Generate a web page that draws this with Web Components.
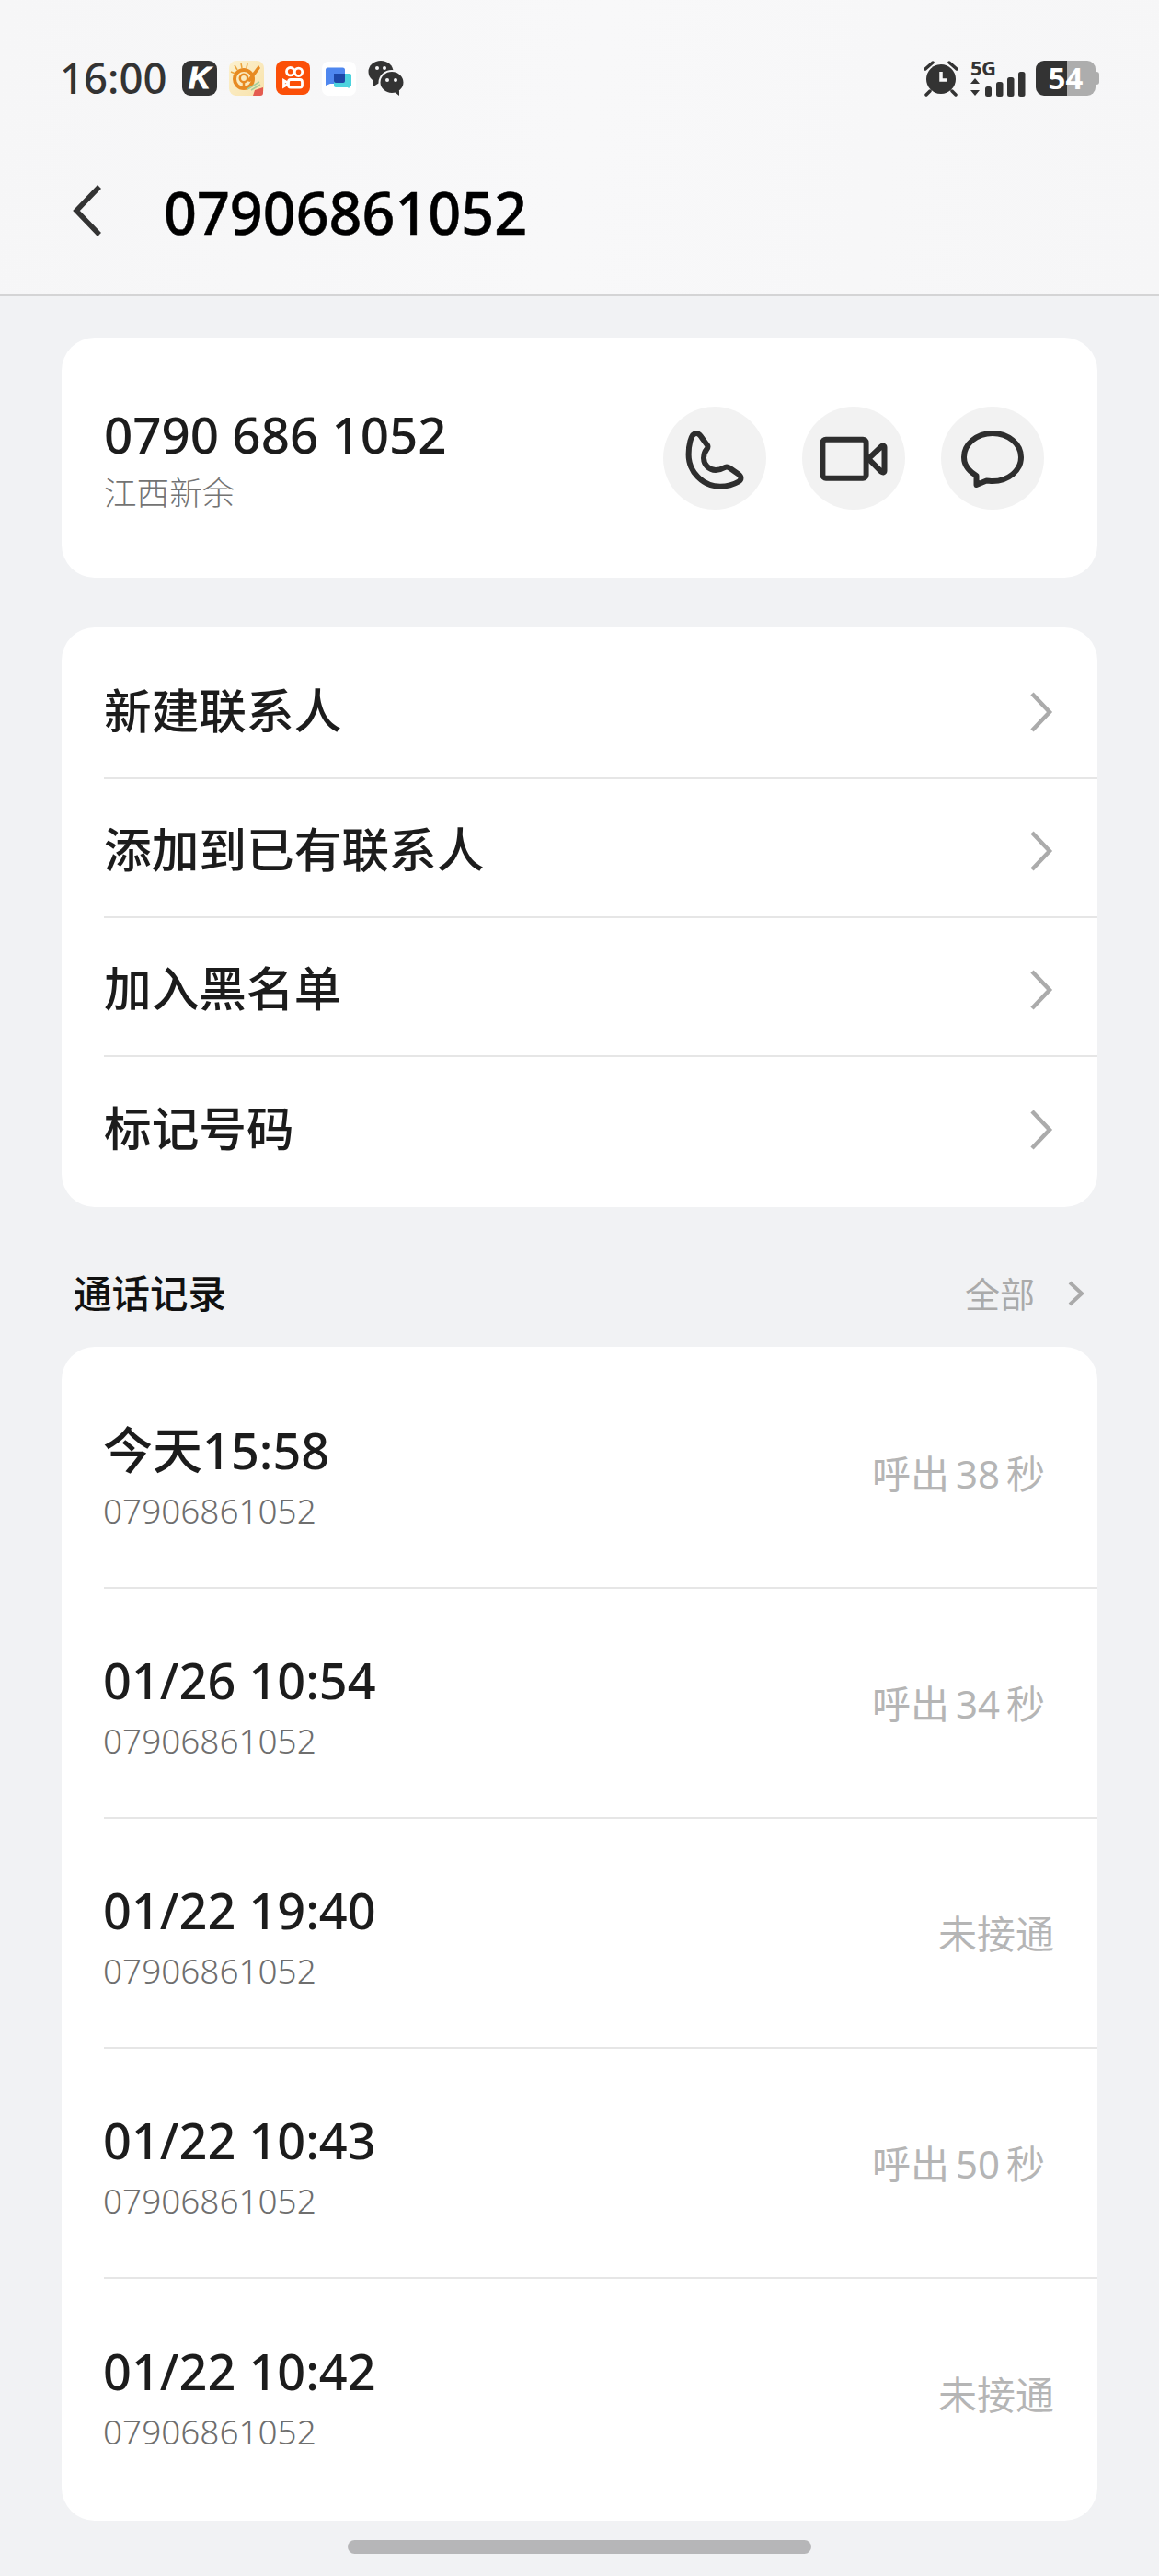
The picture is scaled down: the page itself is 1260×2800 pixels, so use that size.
<!DOCTYPE html>
<html lang="zh"><head><meta charset="utf-8"><title>07906861052</title>
<style>
html,body{margin:0;padding:0;background:#f1f2f4}
body{width:1260px;height:2800px;overflow:hidden;font-family:"Noto Sans","Noto Sans CJK SC",sans-serif;color:#1c1c1c}
</style></head><body>
<phone-app>
  <status-bar slot="top"></status-bar>
  <title-bar slot="top">07906861052</title-bar>
  <info-card number="0790 686 1052" place="江西新余"></info-card>
  <menu-card>
    <menu-row>新建联系人</menu-row>
    <menu-row>添加到已有联系人</menu-row>
    <menu-row>加入黑名单</menu-row>
    <menu-row last>标记号码</menu-row>
  </menu-card>
  <section-head title="通话记录" more="全部"></section-head>
  <call-card>
    <call-row time="今天15:58" status="呼出 38 秒"></call-row>
    <call-row time="01/26 10:54" status="呼出 34 秒"></call-row>
    <call-row time="01/22 19:40" status="未接通" wide></call-row>
    <call-row time="01/22 10:43" status="呼出 50 秒"></call-row>
    <call-row time="01/22 10:42" status="未接通" wide last></call-row>
  </call-card>
  <home-bar></home-bar>
</phone-app>
<script>
function def(name,css,html,init){
  customElements.define(name,class extends HTMLElement{
    constructor(){super();const r=this.attachShadow({mode:'open'});
      r.innerHTML='<style>'+css+'</style>'+(typeof html==='function'?html(this):html);}
    connectedCallback(){
      if(typeof init==='function')init(this,this.shadowRoot);
    }
  });
}
const CJK='"Noto Sans","Noto Sans CJK SC",sans-serif';
const attr=(el,root,map)=>{for(const k in map){const n=root.querySelector(map[k]);if(n)n.textContent=el.getAttribute(k)||'';}};

def('phone-app',`:host{display:block;width:1260px;height:2800px;background:#f1f2f4}
.top{display:block;background:linear-gradient(100deg,#f6f6f7,#f8f8f9 50%,#f6f6f7)}
.main{display:flex;flex-direction:column;padding:45px 67px 0}`,
`<div class="top"><slot name="top"></slot></div><div class="main"><slot></slot></div>`);

def('status-bar',`:host{display:flex;align-items:center;height:130px;padding:40px 65px 0 65px;box-sizing:border-box;justify-content:space-between;color:#333}
.l,.r{display:flex;align-items:center}
.t{font:500 45.500px/50px ${CJK};width:133px;position:relative;top:-1px}
svg{display:block}.ic{margin-right:12px}
.k{width:38px;height:38px;border-radius:9px;background:#333;color:#fff;font:italic 700 33px/38px "Liberation Sans",sans-serif;-webkit-text-stroke:1px #fff;text-align:center;margin-right:13px}
.sig{display:flex;flex-direction:column;margin:0 11px 0 12px;width:60px;position:relative;top:-2px}
.fg{font:700 22px/20px ${CJK};height:17px;letter-spacing:-.5px;position:relative;top:2px}
.bat{display:flex;align-items:center;position:relative}
.b{width:65px;height:38px;border-radius:9px;background:linear-gradient(90deg,#333 0 53%,#adadad 53%);color:#fff;font:700 33px/38px ${CJK};text-align:center}
.nub{width:4px;height:14px;background:#adadad;border-radius:0 3px 3px 0}`,
`<div class="l"><span class="t">16:00</span>
<span class="k">K</span>
<svg class="ic" width="39" height="38" viewBox="0 0 39 38"><defs><linearGradient id="g" x1="0" y1="0" x2="1" y2="1"><stop offset="0" stop-color="#fcf1cf"/><stop offset="1" stop-color="#f8e2ab"/></linearGradient></defs><rect width="38" height="38" rx="8" fill="url(#g)"/><path d="M6 5l3 5M13 3l1 5M20 3l-1 5M2 12l5 2" stroke="#eba43c" stroke-width="1.500"/><circle cx="16" cy="20" r="10" fill="none" stroke="#e78a22" stroke-width="4"/><circle cx="16" cy="19" r="4.200" fill="none" stroke="#e78a22" stroke-width="2.500"/><path d="M16 23v5" stroke="#e78a22" stroke-width="2.500"/><path d="M32 5L19 22l4 1 11-15z" fill="#e78a22"/><path d="M20 31l13-8M24 32l10-6" stroke="#a5cf9c" stroke-width="1.500"/><path d="M26 38l2-6 9-3v6a3 3 0 0 1-3 3z" fill="#e45c50"/></svg>
<svg class="ic" width="38" height="38" viewBox="0 0 38 38"><rect width="37" height="37" rx="8" fill="#fb4f08"/><g fill="none" stroke="#fff" stroke-width="2.800"><circle cx="15.700" cy="11.700" r="4.200"/><circle cx="24.500" cy="12.300" r="4.200"/><rect x="13.500" y="20.500" width="15" height="8.500" rx="2.500"/><path d="M13.500 24.500L8.500 21.500v6.500l5-3"/></g></svg>
<svg class="ic" width="37" height="37" viewBox="0 0 37 37" style="margin-right:13px"><rect width="37" height="37" rx="7" fill="#fff"/><path d="M4 9a2.500 2.500 0 0 1 2.500-2.500h16a2.500 2.500 0 0 1 2.500 2.500v12.500a2.500 2.500 0 0 1-2.500 2.500H9l-5 2z" fill="#4f87ef"/><path d="M13 13h17a2 2 0 0 1 2 2v11l-3 3-1-1H15a2 2 0 0 1-2-2z" fill="#4dd3de"/><path d="M13 13h12v8a2 2 0 0 1-2 2h-8a2 2 0 0 1-2-2z" fill="#1d47a8"/></svg>
<svg width="40" height="38" viewBox="0 0 40 38"><ellipse cx="14" cy="12" rx="13.500" ry="12" fill="#333"/><path d="M5 19l1 9 8-5z" fill="#333"/><ellipse cx="26" cy="23.500" rx="13.500" ry="12.500" fill="#333" stroke="#f7f7f8" stroke-width="2"/><path d="M29 34l5 4v-6z" fill="#333"/><circle cx="10" cy="8" r="2" fill="#f7f7f8"/><circle cx="18" cy="8" r="2" fill="#f7f7f8"/><circle cx="21" cy="21" r="2" fill="#f7f7f8"/><circle cx="30" cy="21" r="2" fill="#f7f7f8"/></svg>
</div>
<div class="r">
<svg width="40" height="40" viewBox="0 0 40 40"><circle cx="20" cy="21" r="16" fill="#333"/><path d="M3 10l8-7M37 10l-8-7M8 34l-4 4M32 34l4 4" stroke="#333" stroke-width="3.500" stroke-linecap="round"/><path d="M20 13v9h7" stroke="#f7f7f8" stroke-width="3.500" fill="none"/></svg>
<div class="sig"><span class="fg">5G</span>
<svg width="60" height="27" viewBox="0 0 60 27"><path d="M5 7l5 6H0zM5 26l5-6H0z" fill="#333"/><rect x="16" y="16" width="7" height="11" rx="2.500" fill="#333"/><rect x="28" y="11" width="7.500" height="16" rx="2.500" fill="#333"/><rect x="40" y="6" width="7.500" height="21" rx="2.500" fill="#333"/><rect x="52" y="0" width="7.500" height="27" rx="2.500" fill="#333"/></svg></div>
<div class="bat"><div class="b">54</div><div class="nub"></div></div>
</div>`);

def('title-bar',`:host{display:flex;align-items:center;box-sizing:border-box;padding:0 0 0 79px;height:192px;border-bottom:2px solid #d4d4d5}
svg{display:block;margin-right:67px;position:relative;top:4px}
.x{font:500 62.800px/80px ${CJK};-webkit-text-stroke:.5px #000;color:#000;position:relative;top:6px}`,
`<svg width="32" height="58" viewBox="0 0 32 58"><path d="M29 3L4 29l25 26" fill="none" stroke="#333" stroke-width="5.500"/></svg><span class="x"><slot></slot></span>`);

const ICONS=[
 '<path d="M36 29C39 29 41 32 42.500 34.500L48 42C49 43.500 48.500 44.500 47.500 46C45 49 44 52 44 56C44 63 50 69 57 69C60.500 69 63.500 68 66 66.500C68 65.200 70 65.200 72 66.500L82 73.500C85 75.700 85.500 79.500 82 81.500C76 85 69 86.700 62 86.700C43 86.700 27.600 71 27.600 52C27.600 44 29.500 29 36 29Z"/>',
 '<rect x="22.400" y="35.700" width="47.200" height="42" rx="3.500"/><path d="M72 56.700L86 43.500C88 42 89.500 42.500 89.500 44.500V69.500C89.500 71.500 88 72 86 70.500Z"/>',
 '<path d="M38.500 75C30 70 25 63 25 55C25 40.500 39 29 56 29C73 29 87 40.500 87 55C87 69.500 73 81 56 81C53.500 81 51.500 80.500 49.500 80.500L38.500 85Z"/>'];

def('info-card',`:host{display:flex;align-items:center;justify-content:space-between;height:261px;background:#fff;border-radius:36px;padding:0 58px 0 46px;box-sizing:border-box}
.n{font:500 54.700px/62px ${CJK};color:#1c1c1c}
.p{font:300 35.600px/44px ${CJK};color:#737373;margin-top:10px}
.col{position:relative;top:1px}
.bs{display:flex;gap:39px}
svg{display:block;width:112px;height:112px;border-radius:50%;background:#f2f2f2;fill:none;stroke:#2e2e2e;stroke-width:6;stroke-linejoin:round}`,
()=>`<div class="col"><div class="n"></div><div class="p"></div></div><div class="bs">${ICONS.map(i=>`<svg viewBox="0 0 112 112">${i}</svg>`).join('')}</div>`,
(el,r)=>attr(el,r,{number:'.n',place:'.p'}));

def('menu-card',`:host{display:block;background:#fff;border-radius:36px;margin-top:54px;padding:14px 0 12px;height:630px;box-sizing:border-box}`,`<slot></slot>`);

def('menu-row',`:host{display:flex;align-items:center;justify-content:space-between;height:151px;box-sizing:border-box;margin-left:46px;padding:2px 47px 0 0;border-bottom:2px solid #e6e6e6;font:500 51.700px/64px ${CJK};color:#1c1c1c}
:host([last]){border-bottom:0}
svg{display:block;position:relative;top:2px}`,
`<span><slot></slot></span><svg width="28" height="46" viewBox="0 0 28 46"><path d="M4 3l19 20L4 43" fill="none" stroke="#ababab" stroke-width="4.500"/></svg>`);

def('section-head',`:host{display:flex;align-items:center;justify-content:space-between;height:152px;padding:36px 13px 0 13px;box-sizing:border-box}
.t{font:500 41.500px/52px ${CJK};color:#111}
.m{display:flex;align-items:center;font:400 38px/48px ${CJK};color:#aaa}
svg{display:block;margin-left:35px}`,
`<span class="t"></span><span class="m"><span class="w"></span><svg width="20" height="30" viewBox="0 0 20 30"><path d="M3 3l13 12L3 27" fill="none" stroke="#aaa" stroke-width="4"/></svg></span>`,
(el,r)=>attr(el,r,{title:'.t',more:'.w'}));

def('call-card',`:host{display:block;background:#fff;border-radius:36px;padding-top:13px;height:1276px;box-sizing:border-box}`,`<slot></slot>`);

def('call-row',`:host{display:flex;align-items:center;justify-content:space-between;height:250px;box-sizing:border-box;margin-left:46px;padding:0 57px 0 0;border-bottom:2px solid #e6e6e6}
:host([last]){border-bottom:0}
:host([wide]){padding-right:47px}
.a{position:relative;top:3px;margin-left:-1px}
.t{font:500 54px/64px ${CJK};color:#1c1c1c}
.s{font:300 36.900px/46px ${CJK};color:#6e6e6e;margin-top:11px}
.st{font:400 42px/50px ${CJK};color:#b5b5b5;position:relative;top:1px;word-spacing:-4px}`,
`<div class="a"><div class="t"></div><div class="s">07906861052</div></div><div class="st"></div>`,
(el,r)=>attr(el,r,{time:'.t',status:'.st'}));

def('home-bar',`:host{display:flex;justify-content:center;padding-top:21px}
div{width:504px;height:15px;border-radius:8px;background:#b6b6b8}`,`<div></div>`);
</script>
</body></html>
